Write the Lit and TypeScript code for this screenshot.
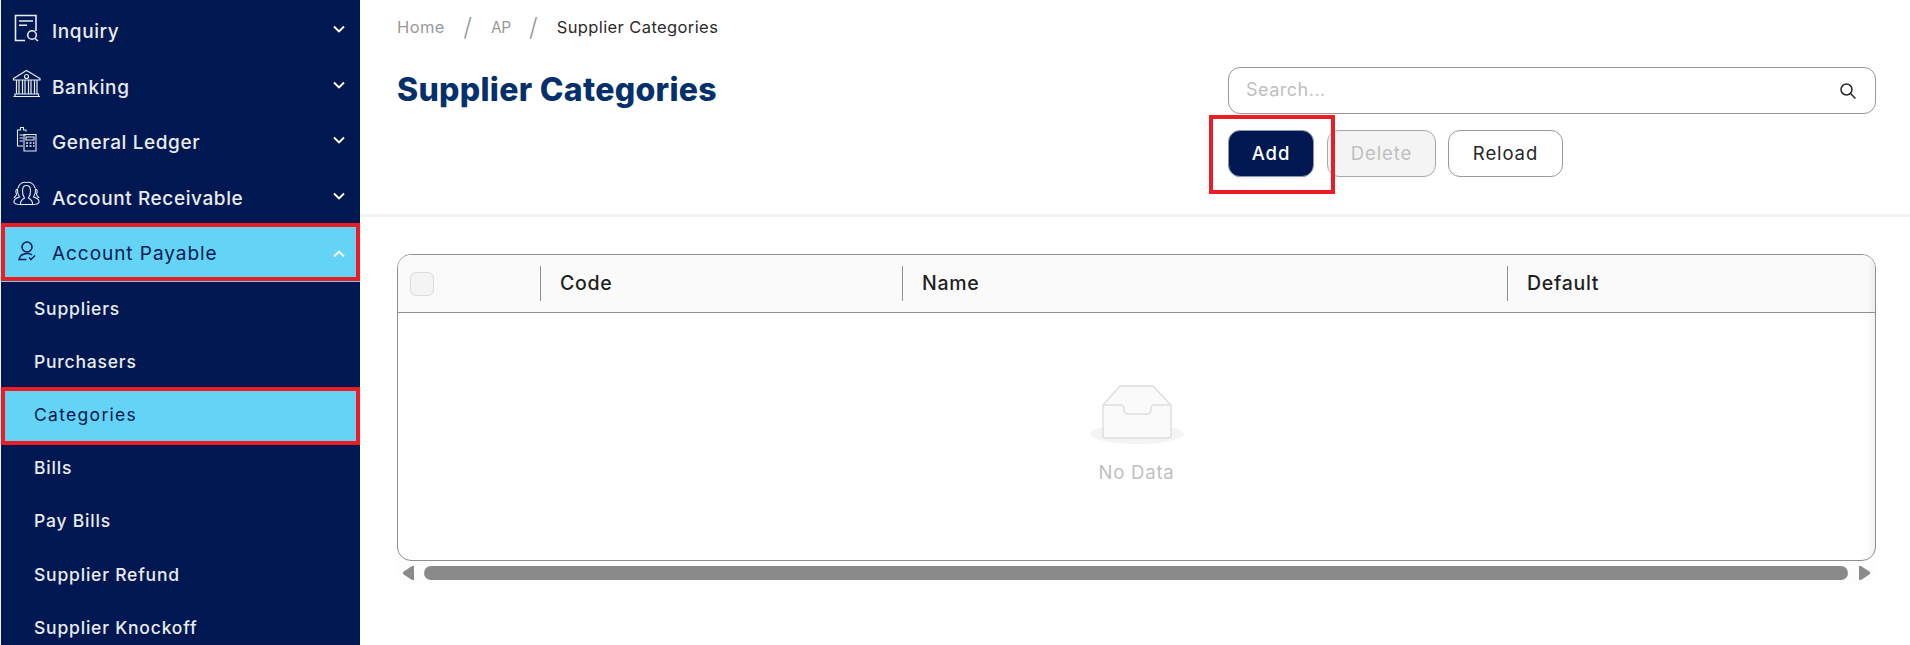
import { LitElement, html, css, svg } from "lit";
import { customElement } from "lit/decorators.js";

const icons = {
  inquiry: svg`<path d="M29 19V3.500H8.500V28.500H18M12 9H26M12 13.300H20" fill="none" stroke="currentColor" stroke-width="1.600"/><circle cx="25" cy="23" r="4.300" fill="none" stroke="currentColor" stroke-width="1.600"/><path d="M28 26.500L31 29" stroke="currentColor" stroke-width="1.600"/>`,
  bank: svg`<g fill="none" stroke="currentColor" stroke-width="1.200"><path d="M6.500 11.500L19.500 3.500L33 11.500V13H6.500ZM6.500 29.500H33M8 27H31.500V29.500H8Z"/><circle cx="19.500" cy="9.500" r="2"/><path d="M9.500 13V27M12 13V27M15.500 13V27M18 13V27M21.500 13V27M24 13V27M27.500 13V27M30 13V27"/></g>`,
  ledger: svg`<g fill="none" stroke="currentColor" stroke-width="1.100"><path d="M19 8.500V7H16.500V4.500H13.500V7H10.500V23H16M12.500 12H19M12.500 15H16M12.500 18H16"/><path d="M17 11.500H29V28H17ZM19 14H27V17H19Z"/><path d="M19 20H21M22.500 20H24.500M26 20H27.500M19 23H21M22.500 23H24.500M26 23H27.500" stroke-width="1.300"/></g>`,
  people: svg`<g fill="none" stroke="currentColor" stroke-width="1.100"><path d="M13 26.500H26"/><path d="M13 26.500C10 26.500 8 26 7 24.500C6.500 22 9 20 12.500 19C11 16.500 10 14 10.500 11C8.500 11.500 8.500 14 9.500 16C9.500 18 8 18.500 7 20"/><path d="M26 26.500C29 26.500 31 26 32 24.500C32.500 22 30 20 26.500 19C28 16.500 29 14 28.500 11C30.500 11.500 30.500 14 29.500 16C29.500 18 31 18.500 32 20"/><path d="M13.500 26.500C13 23 15 21.500 17.500 20C15 16.500 14 7.500 19.500 7.500C25 7.500 24 16.500 21.500 20C24 21.500 26 23 25.500 26.500"/><path d="M11 10C12 6 15.500 3.500 19.500 4.500C23.500 3.500 27 6 28 10"/></g>`,
  payable: svg`<g fill="none" stroke="currentColor" stroke-width="1.500"><circle cx="20" cy="13" r="5"/><path d="M19.500 25.500H12C12.500 22 15.500 20 19.500 19.500C21.500 19.300 23.500 19.700 25 21"/><path d="M22 23.500L24 25.500L28 21.500" stroke-width="1.300"/></g>`,
};

const chevron = (up: boolean) => html`<svg class="chev" viewBox="0 0 14 14" width="14" height="14"><path d=${up ? "M2 9.500L7 4.500L12 9.500" : "M2 4.500L7 9.500L12 4.500"} fill="none" stroke="currentColor" stroke-width="1.900"/></svg>`;

@customElement("app-root")
export class AppRoot extends LitElement {
  static styles = css`
    :host { display: block; height: 645px; overflow: hidden; position: relative; font-family: Inter, "Open Sans", sans-serif; background: #fff; }
    * { box-sizing: border-box; }
    .app { display: grid; grid-template-columns: 360px 1fr; height: 645px; }
    .side { background: #001851; border-left: 1px solid #f4f4fa; color: #e9ebf1; height: 645px; overflow: hidden; padding-top: 4px; }
    .row { height: 55.500px; display: flex; align-items: center; font-size: 19px; font-weight: 500; letter-spacing: 0.6px; }
    .ic { width: 40px; height: 40px; margin-left: 6px; margin-right: 5px; flex: none; }
    .row .lbl { flex: 1; }
    .chev { margin-right: 14px; margin-top: -5px; color: #fff; }
    .row.on { background: #63d4f5; color: #001851; font-weight: 400; letter-spacing: 0.95px; }
    .row.on .chev { margin-top: 0; }
    .sub { height: 53.200px; display: flex; align-items: center; padding-left: 33px; font-size: 17.500px; font-weight: 500; letter-spacing: 0.8px; }
    .sub.on { background: #63d4f5; color: #001851; font-weight: 400; letter-spacing: 1.300px; }
    .main { min-width: 0; }
    .head { height: 217px; border-bottom: 3px solid #f3f3f3; display: flex; justify-content: space-between; padding: 0 34px 0 37px; }
    .crumbs { display: flex; align-items: center; height: 18px; margin-top: 18px; font-size: 16.500px; letter-spacing: 0.4px; color: #999; }
    .crumbs .sep { margin: 0 18.500px; font-size: 25px; font-weight: 300; color: #999; }
    .crumbs .ap { letter-spacing: -0.500px; font-size: 15.500px; }
    .crumbs .cur { color: #2b2b2b; font-weight: 400; }
    h1 { margin: 35px 0 0; font-size: 32px; line-height: 38px; font-weight: 800; color: #06306b; letter-spacing: 0.3px; }
    .tools { width: 648px; padding-top: 67px; display: flex; flex-direction: column; gap: 16px; }
    .search { height: 47px; border: 1px solid #999; border-radius: 12px; display: flex; align-items: center; justify-content: space-between; padding: 0 17px 0 17px; font-size: 18px; letter-spacing: 0.500px; color: #bfbfbf; }
    .search span { margin-bottom: 2px; }
    .btns { display: flex; }
    .btn { height: 47px; border: 1px solid #999; border-radius: 12px; display: flex; align-items: center; justify-content: center; padding-bottom: 2px; font-size: 18.500px; letter-spacing: 0.9px; color: #262626; background: #fff; }
    .add { width: 86px; background: #001851; color: #fff; border-color: #8d96ad; margin-right: 13px; font-weight: 500; box-shadow: 0 2px 0 rgba(0,0,0,.04); }
    .del { width: 109px; background: #f4f4f4; color: #bfbfbf; border-color: #a8a8a8; margin-right: 12px; }
    .rel { width: 115px; }
    .content { padding: 37px 34px 0 37px; }
    .table { height: 307px; border: 1px solid #8f8f8f; border-radius: 14px; overflow: hidden; position: relative; display: flex; flex-direction: column; box-shadow: inset -10px 0 8px -8px rgba(0,0,0,.08); }
    .thead { height: 58px; flex: none; background: #fafafa; border-bottom: 1px solid #8f8f8f; display: grid; grid-template-columns: 142px 362px 605px 1fr; align-items: center; font-size: 19.500px; font-weight: 500; letter-spacing: 0.7px; color: #1f1f1f; box-shadow: inset -10px 0 8px -8px rgba(0,0,0,.08); }
    .th { height: 35px; display: flex; align-items: center; padding-left: 19px; padding-bottom: 2px; border-left: 1px solid #8f8f8f; }
    .th.first { border: 0; padding-left: 12px; padding-bottom: 0; }
    .cb { width: 24px; height: 24px; border: 1px solid #dcdcdc; border-radius: 6px; background: #f4f4f4; }
    .empty { flex: 1; display: flex; flex-direction: column; align-items: center; padding-top: 72px; padding-left: 0; color: #bfbfbf; font-size: 18.500px; letter-spacing: 0.8px; }
    .empty svg { display: block; margin-bottom: 16px; }
    .scroll { height: 23px; margin-top: 0; background: #fdfdfd; border-radius: 0 0 14px 14px; display: flex; align-items: flex-start; padding: 5px 6px 0 6px; }
    .thumb { flex: 1; height: 14px; border-radius: 7px; background: #8a8a8a; margin: 0 11px 0 10px; }
    .arr { display: block; flex: none; }
    .mark { position: absolute; border: 4px solid #ed1c24; pointer-events: none; }
    .m1 { left: 1px; top: 223px; width: 359px; height: 58px; }
    .m2 { left: 1px; top: 387px; width: 359px; height: 58px; }
    .m3 { left: 1209px; top: 115px; width: 126px; height: 79px; }
  `;

  render() {
    const top = [
      ["Inquiry", icons.inquiry],
      ["Banking", icons.bank],
      ["General Ledger", icons.ledger],
      ["Account Receivable", icons.people],
    ] as const;
    const subs = ["Suppliers", "Purchasers", "Categories", "Bills", "Pay Bills", "Supplier Refund", "Supplier Knockoff"];
    return html`
      <div class="app">
        <nav class="side">
          ${top.map(([l, i]) => html`<div class="row"><svg class="ic" viewBox="0 0 40 40">${i}</svg><span class="lbl">${l}</span>${chevron(false)}</div>`)}
          <div class="row on"><svg class="ic" viewBox="0 0 40 40">${icons.payable}</svg><span class="lbl">Account Payable</span>${chevron(true)}</div>
          ${subs.map((s) => html`<div class="sub ${s === "Categories" ? "on" : ""}">${s}</div>`)}
        </nav>
        <main class="main">
          <header class="head">
            <div>
              <div class="crumbs"><span>Home</span><span class="sep">/</span><span class="ap">AP</span><span class="sep">/</span><span class="cur">Supplier Categories</span></div>
              <h1>Supplier Categories</h1>
            </div>
            <div class="tools">
              <div class="search"><span>Search...</span>
                <svg width="20" height="20" viewBox="0 0 20 20"><circle cx="8.500" cy="8.500" r="5.500" fill="none" stroke="#262626" stroke-width="1.500"/><path d="M12.500 12.500L17.500 17.500" stroke="#262626" stroke-width="1.500"/></svg>
              </div>
              <div class="btns"><div class="btn add">Add</div><div class="btn del">Delete</div><div class="btn rel">Reload</div></div>
            </div>
          </header>
          <section class="content">
            <div class="table">
              <div class="thead">
                <div class="th first"><div class="cb"></div></div>
                <div class="th">Code</div><div class="th">Name</div><div class="th">Default</div>
              </div>
              <div class="empty">
                <svg width="94" height="60" viewBox="0 0 94 60">
                  <ellipse cx="47" cy="49" rx="47" ry="10" fill="#f4f4f4"/>
                  <path d="M13 20L30 1H63L81 20V50Q81 53 78 53H16Q13 53 13 50Z" fill="#fafafa" stroke="#dedede" stroke-width="1.500"/>
                  <path d="M13 20H31Q34 20 34 24Q34 29 38 29H57Q61 29 61 24Q61 20 64 20H81" fill="none" stroke="#dedede" stroke-width="1.500"/>
                </svg>
                <span>No Data</span>
              </div>
            </div>
            <div class="scroll">
              <svg class="arr" width="11" height="14" viewBox="0 0 11 14"><path d="M11 0V14H9L0 8V6L9 0Z" fill="#8a8a8a"/></svg>
              <div class="thumb"></div>
              <svg class="arr" width="11" height="14" viewBox="0 0 11 14"><path d="M0 0V14H2L11 8V6L2 0Z" fill="#8a8a8a"/></svg>
            </div>
          </section>
        </main>
      </div>
      <div class="mark m1"></div><div class="mark m2"></div><div class="mark m3"></div>
    `;
  }
}
